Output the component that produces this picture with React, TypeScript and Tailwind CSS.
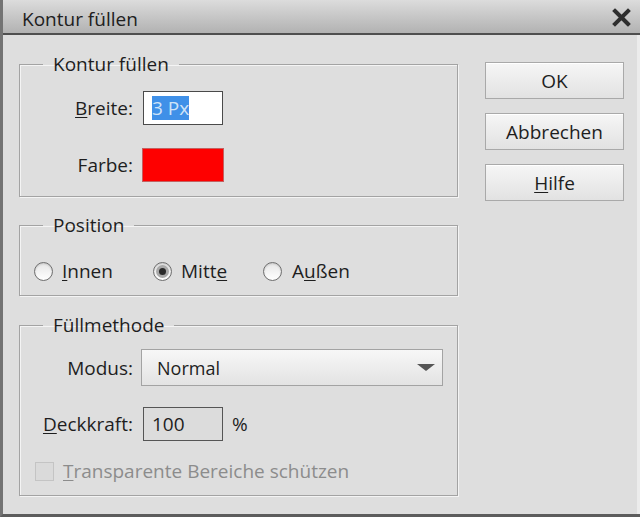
import React from 'react'

const font = { fontFamily: '"Open Sans", "Noto Sans", sans-serif' }

function Radio({ checked }: { checked?: boolean }) {
  return (
    <span className="flex h-[19px] w-[19px] items-center justify-center rounded-full border border-[#6e6e6e] bg-gradient-to-b from-[#e6e6e6] to-[#ffffff] shadow-[inset_0_1px_2px_rgba(0,0,0,0.15)]">
      {checked && (
        <span className="flex h-[13px] w-[13px] items-center justify-center rounded-full bg-[#a9a9a9]">
          <span className="h-[7px] w-[7px] rounded-full bg-[#2a2a2a]" />
        </span>
      )}
    </span>
  )
}

function Button({ children }: { children: React.ReactNode }) {
  return (
    <button className="flex h-[37px] w-[139px] items-center justify-center border border-[#a9a9a9] bg-gradient-to-b from-[#f6f6f6] to-[#e2e2e2] text-[19px] leading-[24px] text-[#1e1e1e] shadow-[inset_0_1px_0_#ffffff]">
      {children}
    </button>
  )
}

const legendCls = 'ml-[23px] px-[10px] text-[19px] leading-[24px] text-[#1e1e1e]'
const fieldCls = 'border border-[#a3a3a3] shadow-[inset_1px_1px_0_#f4f4f4,1px_1px_0_#f4f4f4]'

export default function App() {
  return (
    <div
      className="flex h-[517px] w-[640px] flex-col overflow-hidden border-b-[3px] border-l-[3px] border-b-[#5c5c5c] border-l-[#737373] bg-[#dedede] text-[#1e1e1e]"
      style={font}
    >
      <div className="flex h-[35px] shrink-0 items-center justify-between border-b-2 border-[#4f4f4f] bg-gradient-to-b from-[#dcdcdc] to-[#b2b2b2] pl-[19px] pr-[9px] pt-[5px]">
        <span className="text-[19px] leading-none text-[#202020]">Kontur füllen</span>
        <svg width="19" height="19" viewBox="0 0 19 19" className="-mt-[3px]">
          <path d="M3 3 L16 16 M16 3 L3 16" stroke="#2e2e2e" strokeWidth="4" strokeLinecap="square" />
        </svg>
      </div>

      <div className="flex flex-1 border-r-[3px] border-r-[#ececec] pl-[16px] pt-[17px]">
        <div className="flex w-[439px] flex-col">
          <fieldset className={`h-[145px] ${fieldCls}`}>
            <legend className={legendCls}>Kontur füllen</legend>
            <div className="mt-[15px] grid grid-cols-[113px_auto] items-center gap-x-[10px] gap-y-[23px] text-[19px] leading-[24px]">
              <span className="text-right">
                <u className="underline-offset-2">B</u>reite:
              </span>
              <div className="flex h-[34px] w-[80px] items-center border border-[#4a4a4a] bg-white pl-[8px]">
                <span className="bg-[#3f90e8] text-[#cfe3f7]">3 Px</span>
              </div>
              <span className="text-right">Farbe:</span>
              <div className="-ml-px h-[34px] w-[82px] border border-[#c46060] bg-[#fe0000]" />
            </div>
          </fieldset>

          <fieldset className={`mt-[16px] h-[83px] ${fieldCls}`}>
            <legend className={legendCls}>Position</legend>
            <div className="mt-[22px] flex h-[24px] items-center pl-[14px] text-[19px] leading-[24px]">
              <div className="flex w-[119px] items-center gap-[9px]">
                <Radio />
                <span>
                  <u className="underline-offset-2">I</u>nnen
                </span>
              </div>
              <div className="flex w-[110px] items-center gap-[9px]">
                <Radio checked />
                <span>
                  Mitt<u className="underline-offset-2">e</u>
                </span>
              </div>
              <div className="flex items-center gap-[10px]">
                <Radio />
                <span>
                  A<u className="underline-offset-2">u</u>ßen
                </span>
              </div>
            </div>
          </fieldset>

          <fieldset className={`mt-[17px] h-[183px] ${fieldCls}`}>
            <legend className={legendCls}>Füllmethode</legend>
            <div className="mt-[12px] flex items-center text-[19px] leading-[24px]">
              <span className="w-[113px] text-right">Modus:</span>
              <div className="ml-[8px] flex h-[37px] w-[302px] items-center justify-between border border-[#a3a3a3] bg-gradient-to-b from-[#f7f7f7] to-[#e3e3e3] pl-[15px] pr-[7px]">
                <span className="text-[18px]">Normal</span>
                <svg width="18" height="8" viewBox="0 0 18 8">
                  <path d="M0 0 H18 L9 7 Z" fill="#555555" />
                </svg>
              </div>
            </div>
            <div className="mt-[21px] flex items-center text-[19px] leading-[24px]">
              <span className="w-[113px] text-right">
                <u className="underline-offset-2">D</u>eckkraft:
              </span>
              <div className="ml-[10px] flex h-[34px] w-[80px] items-center border border-[#555555] bg-[#dcdcdc] pl-[8px]">
                100
              </div>
              <span className="ml-[9px]">%</span>
            </div>
            <div className="mt-[18px] flex h-[24px] items-center gap-[9px] pl-[15px] text-[19px] leading-[24px]">
              <span className="h-[19px] w-[19px] border border-[#c4c4c4] bg-[#dadada]" />
              <span className="text-[#8c8c8c]">
                <u className="underline-offset-2">T</u>ransparente Bereiche schützen
              </span>
            </div>
          </fieldset>
        </div>

        <div className="ml-[27px] mt-[10px] flex flex-col gap-[14px]">
          <Button>OK</Button>
          <Button>Abbrechen</Button>
          <Button>
            <span>
              <u className="underline-offset-2">H</u>ilfe
            </span>
          </Button>
        </div>
      </div>
    </div>
  )
}
